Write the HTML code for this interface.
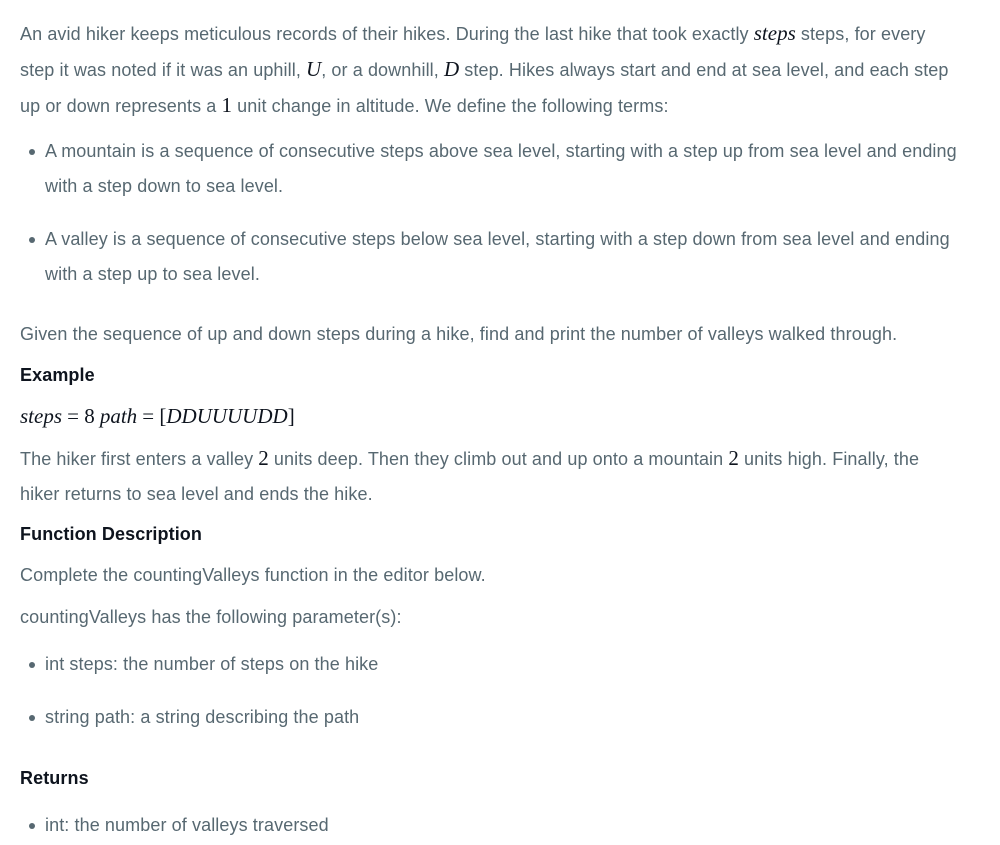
<!DOCTYPE html>
<html><head><meta charset="utf-8"><style>
body{margin:0;background:#fff;width:1000px;height:845px;overflow:hidden;position:relative;font-family:"Liberation Sans",sans-serif;font-size:18px;color:#576871;letter-spacing:0.1px}
.l{position:absolute;left:20px;line-height:35px;white-space:nowrap}
.b{left:45px}
.dot{position:absolute;left:29px;width:6px;height:6px;border-radius:50%;background:#576871}
.h{color:#0e141e;font-weight:bold}
.m{font-family:"Liberation Serif","DejaVu Serif",serif;font-style:italic;font-size:21px;color:#0e141e;letter-spacing:0}
.n{font-family:"Liberation Serif","DejaVu Serif",serif;font-size:21px;color:#0e141e;letter-spacing:0}
</style></head><body>
<div class="l" style="top:16px">An avid hiker keeps meticulous records of their hikes. During the last hike that took exactly <span class="m">steps</span> steps, for every<br>step it was noted if it was an uphill, <span class="m">U</span>, or a downhill, <span class="m">D</span> step. Hikes always start and end at sea level, and each step<br>up or down represents a <span class="n">1</span> unit change in altitude. We define the following terms:</div>
<div class="dot" style="top:149px"></div>
<div class="l b" style="top:134px">A mountain is a sequence of consecutive steps above sea level, starting with a step up from sea level and ending<br>with a step down to sea level.</div>
<div class="dot" style="top:237px"></div>
<div class="l b" style="top:222px">A valley is a sequence of consecutive steps below sea level, starting with a step down from sea level and ending<br>with a step up to sea level.</div>
<div class="l" style="top:317px">Given the sequence of up and down steps during a hike, find and print the number of valleys walked through.</div>
<div class="l h" style="top:358px">Example</div>
<div class="l" style="top:399px"><span class="m">steps</span> <span class="n">= 8</span> <span class="m">path</span> <span class="n">= [</span><span class="m">DDUUUUDD</span><span class="n">]</span></div>
<div class="l" style="top:441px">The hiker first enters a valley <span class="n">2</span> units deep. Then they climb out and up onto a mountain <span class="n">2</span> units high. Finally, the<br>hiker returns to sea level and ends the hike.</div>
<div class="l h" style="top:517px">Function Description</div>
<div class="l" style="top:558px">Complete the countingValleys function in the editor below.</div>
<div class="l" style="top:600px">countingValleys has the following parameter(s):</div>
<div class="dot" style="top:662px"></div>
<div class="l b" style="top:647px">int steps: the number of steps on the hike</div>
<div class="dot" style="top:715px"></div>
<div class="l b" style="top:700px">string path: a string describing the path</div>
<div class="l h" style="top:761px">Returns</div>
<div class="dot" style="top:823px"></div>
<div class="l b" style="top:808px">int: the number of valleys traversed</div>
</body></html>
